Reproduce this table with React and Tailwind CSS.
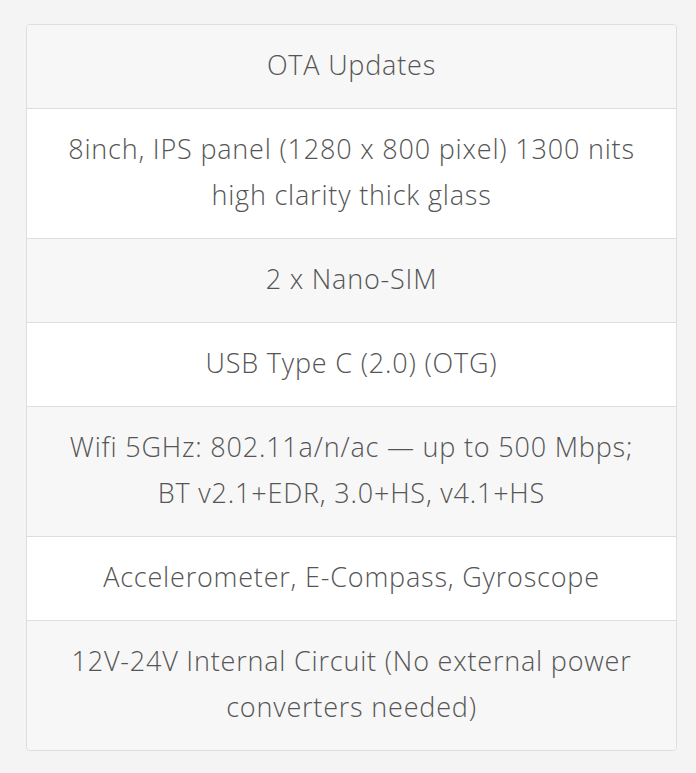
const specs = [
    ["OTA Updates"],
    ["8inch, IPS panel (1280 x 800 pixel) 1300 nits", "high clarity thick glass"],
    ["2 x Nano-SIM"],
    ["USB Type C (2.0) (OTG)"],
    ["Wifi 5GHz: 802.11a/n/ac — up to 500 Mbps;", "BT v2.1+EDR, 3.0+HS, v4.1+HS"],
    ["Accelerometer, E-Compass, Gyroscope"],
    ["12V-24V Internal Circuit (No external power", "converters needed)"],
]

function SpecRow({ lines, index }){
    const striped = index % 2 === 0
    return (
        <div className={`${striped ? "bg-[#f7f7f7]" : "bg-white"} ${index > 0 ? "border-t border-[#dedede]" : ""} px-4 pt-[17px] pb-[20px] text-center`}>
            {lines.map((line, i) => (
                <div key={i} className="whitespace-nowrap">{line}</div>
            ))}
        </div>
    )
}

export default function App(){
    return (
        <div className="min-h-[773px] bg-[#f4f4f4] pt-6 px-[26px] pb-6" style={{ fontFamily: "'Open Sans', Lato, sans-serif" }}>
            <div className="w-[651px] overflow-hidden rounded-[4px] border border-[#dedede] text-[27px] font-light leading-[46px] tracking-[0.8px] text-[#555]">
                {specs.map((lines, i) => (
                    <SpecRow key={i} lines={lines} index={i} />
                ))}
            </div>
        </div>
    )
}
